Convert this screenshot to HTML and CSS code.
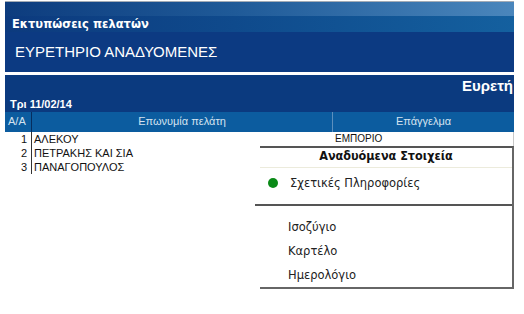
FILE: index.html
```html
<!DOCTYPE html>
<html>
<head>
<meta charset="utf-8">
<link rel="stylesheet" href="styles.css">
</head>
<body>
<div class="page">
  <div class="hdr">
    <div class="band1"></div>
    <div class="band2">Εκτυπώσεις πελατών</div>
    <div class="band3">ΕΥΡΕΤΗΡΙΟ ΑΝΑΔΥΟΜΕΝΕΣ</div>
  </div>
  <div class="report">
    <div class="rtitle">Ευρετή</div>
    <div class="rdate">Τρι 11/02/14</div>
  </div>
  <div class="table">
    <div class="thead">
      <div class="c1">A/A</div>
      <div class="c2">Επωνυμία πελάτη</div>
      <div class="c3">Επάγγελμα</div>
    </div>
    <div class="row"><div class="c1">1</div><div class="c2">ΑΛΕΚΟΥ</div><div class="c3">ΕΜΠΟΡΙΟ</div></div>
    <div class="row"><div class="c1">2</div><div class="c2">ΠΕΤΡΑΚΗΣ ΚΑΙ ΣΙΑ</div><div class="c3"></div></div>
    <div class="row"><div class="c1">3</div><div class="c2">ΠΑΝΑΓΟΠΟΥΛΟΣ</div><div class="c3"></div></div>
    <div class="menu">
      <div class="mtitle">Αναδυόμενα Στοιχεία</div>
      <div class="mitem sel"><span class="dot"></span>Σχετικές Πληροφορίες</div>
      <div class="msep"></div>
      <div class="mlist">
        <div class="mitem">Ισοζύγιο</div>
        <div class="mitem">Καρτέλο</div>
        <div class="mitem">Ημερολόγιο</div>
      </div>
    </div>
  </div>
</div>
</body>
</html>
```

FILE: styles.css
```css
* { box-sizing: border-box; }
html, body { margin: 0; padding: 0; background: #fff; }
body { font-family: "Liberation Sans", Arial, sans-serif; }
.page { width: 524px; height: 314px; padding: 1px 10px 0 5px; overflow: hidden; }
.hdr { border-top: 1px solid #a3abb5; height: 71px; display: flex; flex-direction: column; }
.band1 { height: 14px; background: linear-gradient(to right, #0d3c7e 0%, #1f5a98 45%, #4a86bc 100%); }
.band2 { height: 16px; background: linear-gradient(to right, #0c3a7e 0%, #0f4a8c 45%, #14609f 100%);
  color: #fff; font: bold 11.5px "DejaVu Sans", sans-serif; padding-left: 7px; line-height: 16px; }
.band3 { flex: 1; background: #0c3a82; color: #fff; font-size: 15px; padding-left: 10px;
  display: flex; align-items: center; padding-bottom: 2px; }
.report { margin-top: 3px; height: 37px; background: #0b3a7f; display: flex; flex-direction: column; justify-content: space-between; overflow: hidden; }
.rtitle { color: #fff; font-weight: bold; font-size: 15px; white-space: nowrap; padding-left: 457px; padding-top: 2px; line-height: 18px; }
.rdate { color: #fff; font-weight: bold; font-size: 11px; padding-left: 5px; line-height: 14px; padding-bottom: 1px; }
.table { position: relative; height: 203px; }
.thead { display: flex; height: 20px; background: #0c5c9f; color: #d4e2ef; font-size: 11px; line-height: 19px; }
.thead .c1 { width: 27px; text-align: left; padding-left: 3px; border-right: 1px solid #062d5e; }
.thead .c2 { width: 301px; text-align: center; border-right: 1px solid #5d8fbd; }
.thead .c3 { flex: 1; text-align: center; }
.row { display: flex; height: 14px; font-size: 11px; line-height: 14px; color: #111; }
.row .c1 { width: 27px; text-align: right; padding-right: 4px; border-right: 1px solid #333; }
.row .c2 { width: 301px; padding-left: 2px; }
.row .c3 { flex: 1; padding-left: 2px; border-right: 1px solid #c8c8c8; font-size: 10px; }
.menu { position: absolute; left: 255px; top: 34px; width: 254px; height: 143px; background: #fff;
  border-top: 2px solid #555; border-right: 2px solid #666; border-bottom: 2px solid #666;
  font: 11.5px "DejaVu Sans", sans-serif; color: #222; }
.mtitle { height: 20px; line-height: 19px; text-align: center; font: bold 12.5px "DejaVu Sans Condensed", "DejaVu Sans", sans-serif; color: #111;
  border-bottom: 1px solid #ecebdc; }
.mitem { line-height: 16px; padding-left: 28px; }
.sel { display: flex; align-items: center; padding-left: 8px; height: 36px; padding-bottom: 6px; }
.dot { width: 10px; height: 10px; border-radius: 50%; background: #0a8a17; margin-right: 12px; }
.msep { height: 2px; background: #555; margin-left: -5px; }
.mlist { display: flex; flex-direction: column; gap: 8px; padding-top: 13px; }
```
